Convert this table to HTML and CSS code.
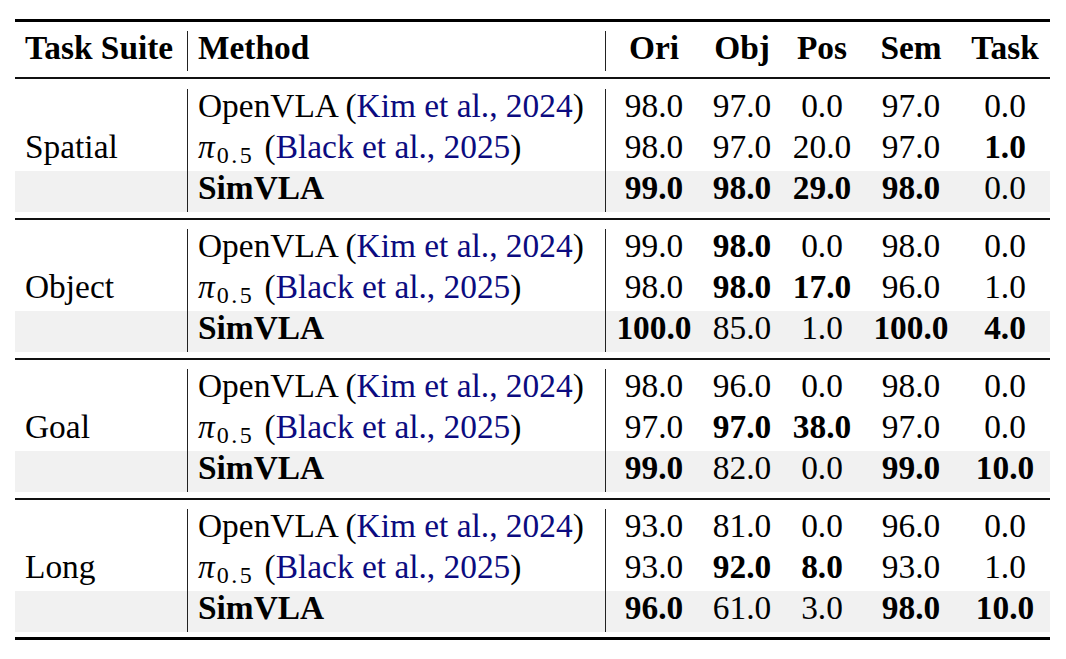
FILE: index.html
```html
<!DOCTYPE html>
<html>
<head>
<meta charset="utf-8">
<link rel="stylesheet" href="styles.css">
</head>
<body>
<div class="table">
  <div class="rule heavy top"></div>
  <div class="row head">
    <div class="c c1"><b>Task Suite</b></div>
    <div class="c c2"><b>Method</b></div>
    <div class="c n"><b>Ori</b></div>
    <div class="c n"><b>Obj</b></div>
    <div class="c n"><b>Pos</b></div>
    <div class="c n"><b>Sem</b></div>
    <div class="c n"><b>Task</b></div>
  </div>
  <div class="rule mid"></div>

  <div class="section">
    <div class="row">
      <div class="c c1"></div>
      <div class="c c2">OpenVLA (<span class="cite">Kim et al., 2024</span>)</div>
      <div class="c n">98.0</div><div class="c n">97.0</div><div class="c n">0.0</div><div class="c n">97.0</div><div class="c n">0.0</div>
    </div>
    <div class="row">
      <div class="c c1">Spatial</div>
      <div class="c c2"><span class="pi">π</span><span class="sub">0.5</span> (<span class="cite">Black et al., 2025</span>)</div>
      <div class="c n">98.0</div><div class="c n">97.0</div><div class="c n">20.0</div><div class="c n">97.0</div><div class="c n"><b>1.0</b></div>
    </div>
    <div class="row ours">
      <div class="c c1"></div>
      <div class="c c2"><b>SimVLA</b></div>
      <div class="c n"><b>99.0</b></div><div class="c n"><b>98.0</b></div><div class="c n"><b>29.0</b></div><div class="c n"><b>98.0</b></div><div class="c n">0.0</div>
    </div>
  </div>
  <div class="rule sep"></div>

  <div class="section">
    <div class="row">
      <div class="c c1"></div>
      <div class="c c2">OpenVLA (<span class="cite">Kim et al., 2024</span>)</div>
      <div class="c n">99.0</div><div class="c n"><b>98.0</b></div><div class="c n">0.0</div><div class="c n">98.0</div><div class="c n">0.0</div>
    </div>
    <div class="row">
      <div class="c c1">Object</div>
      <div class="c c2"><span class="pi">π</span><span class="sub">0.5</span> (<span class="cite">Black et al., 2025</span>)</div>
      <div class="c n">98.0</div><div class="c n"><b>98.0</b></div><div class="c n"><b>17.0</b></div><div class="c n">96.0</div><div class="c n">1.0</div>
    </div>
    <div class="row ours">
      <div class="c c1"></div>
      <div class="c c2"><b>SimVLA</b></div>
      <div class="c n"><b>100.0</b></div><div class="c n">85.0</div><div class="c n">1.0</div><div class="c n"><b>100.0</b></div><div class="c n"><b>4.0</b></div>
    </div>
  </div>
  <div class="rule sep"></div>

  <div class="section">
    <div class="row">
      <div class="c c1"></div>
      <div class="c c2">OpenVLA (<span class="cite">Kim et al., 2024</span>)</div>
      <div class="c n">98.0</div><div class="c n">96.0</div><div class="c n">0.0</div><div class="c n">98.0</div><div class="c n">0.0</div>
    </div>
    <div class="row">
      <div class="c c1">Goal</div>
      <div class="c c2"><span class="pi">π</span><span class="sub">0.5</span> (<span class="cite">Black et al., 2025</span>)</div>
      <div class="c n">97.0</div><div class="c n"><b>97.0</b></div><div class="c n"><b>38.0</b></div><div class="c n">97.0</div><div class="c n">0.0</div>
    </div>
    <div class="row ours">
      <div class="c c1"></div>
      <div class="c c2"><b>SimVLA</b></div>
      <div class="c n"><b>99.0</b></div><div class="c n">82.0</div><div class="c n">0.0</div><div class="c n"><b>99.0</b></div><div class="c n"><b>10.0</b></div>
    </div>
  </div>
  <div class="rule sep"></div>

  <div class="section">
    <div class="row">
      <div class="c c1"></div>
      <div class="c c2">OpenVLA (<span class="cite">Kim et al., 2024</span>)</div>
      <div class="c n">93.0</div><div class="c n">81.0</div><div class="c n">0.0</div><div class="c n">96.0</div><div class="c n">0.0</div>
    </div>
    <div class="row">
      <div class="c c1">Long</div>
      <div class="c c2"><span class="pi">π</span><span class="sub">0.5</span> (<span class="cite">Black et al., 2025</span>)</div>
      <div class="c n">93.0</div><div class="c n"><b>92.0</b></div><div class="c n"><b>8.0</b></div><div class="c n">93.0</div><div class="c n">1.0</div>
    </div>
    <div class="row ours">
      <div class="c c1"></div>
      <div class="c c2"><b>SimVLA</b></div>
      <div class="c n"><b>96.0</b></div><div class="c n">61.0</div><div class="c n">3.0</div><div class="c n"><b>98.0</b></div><div class="c n"><b>10.0</b></div>
    </div>
  </div>
  <div class="rule heavy bottom"></div>
</div>
</body>
</html>
```

FILE: styles.css
```css
html, body {
  margin: 0;
  padding: 0;
  background: #ffffff;
}

body {
  font-family: "Liberation Serif", "Times New Roman", "DejaVu Serif", serif;
  font-size: 33.4px;
  color: #000;
}

.table {
  width: 1035px;
  margin-left: 15px;
  padding-top: 19px;
}

.rule {
  background: #000;
}

.rule.heavy {
  height: 3px;
}

.rule.mid {
  height: 2px;
  margin-top: 6px;
  margin-bottom: 10px;
  background: #111;
}

.rule.sep {
  height: 2px;
  margin-top: 6px;
  margin-bottom: 9px;
  background: #111;
}

.rule.top {
  margin-bottom: 9px;
}

.rule.bottom {
  margin-top: 5px;
}

.row {
  display: grid;
  grid-template-columns: 173px 418px 96px 80px 80px 98px 90px;
  height: 41px;
  box-sizing: border-box;
}

.row.head {
  height: 40px;
}

.row.ours {
  background: #f1f1f1;
}

.c {
  line-height: 34px;
  padding-bottom: 7px;
  white-space: nowrap;
  box-sizing: border-box;
}

.head .c {
  padding-bottom: 6px;
}

.c1 {
  padding-left: 10px;
  border-right: 1px solid #222;
}

.c2 {
  padding-left: 10px;
  border-right: 1px solid #222;
}

.n {
  text-align: center;
}

b {
  font-weight: bold;
}

.cite {
  color: #0b0b80;
}

.pi {
  font-style: italic;
  margin-right: 2px;
}

.sub {
  font-size: 24px;
  position: relative;
  top: 5px;
  line-height: 0;
  letter-spacing: 2.5px;
  margin-right: 2px;
}
```
